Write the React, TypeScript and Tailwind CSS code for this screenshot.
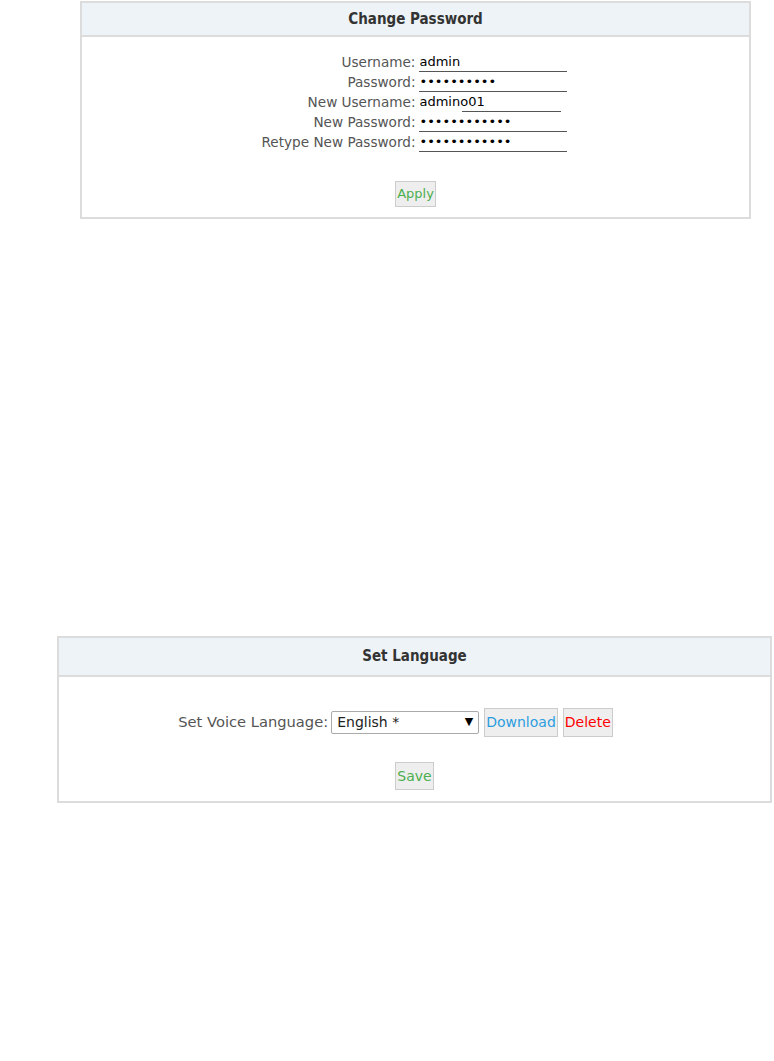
import React from 'react';

const label = "text-right text-[13.6px] text-[#555] pr-1 leading-[20px]";
const field = "w-[148px] h-[20px] border-b border-[#555] text-[13px] text-black leading-[20px]";

function Panel({ title, className, headerH, children }: { title: string; className: string; headerH: string; children: React.ReactNode }) {
  return (
    <div className={`border-2 border-[#dcdcdc] bg-white ${className}`}>
      <div className={`${headerH} flex items-center justify-center bg-[#eef3f7] border-b-2 border-[#dcdcdc] text-[15px] font-bold text-[#333] [font-family:'DejaVu_Sans_Condensed','DejaVu_Sans',sans-serif]`}>
        {title}
      </div>
      {children}
    </div>
  );
}

export default function App() {
  return (
    <div className="w-[774px] h-[1061px] bg-white [font-family:'DejaVu_Sans',Verdana,sans-serif]">
      <div className="pt-px">
        <Panel title="Change Password" className="ml-[80px] w-[671px] h-[218px]" headerH="h-[34px]">
          <div className="pt-[15px] flex justify-center">
            <div className="grid grid-cols-[auto_148px] ml-[-2px]">
              <div className={label}>Username:</div>
              <div className={field}>admin</div>
              <div className={label}>Password:</div>
              <div className={field}>••••••••••</div>
              <div className={label}>New Username:</div>
              <div className="relative w-[148px] h-[20px] text-[13px] text-black leading-[20px]">
                admino01
                <span className="absolute left-[43px] bottom-0 w-[99px] border-b border-[#555]"></span>
              </div>
              <div className={label}>New Password:</div>
              <div className={field}>••••••••••••</div>
              <div className={label}>Retype New Password:</div>
              <div className={field}>••••••••••••</div>
            </div>
          </div>
          <div className="flex justify-center mt-[29px]">
            <button className="h-[26px] px-[1px] bg-[#eeeeee] border border-[#cccccc] text-[13px] text-[#4caf50]">Apply</button>
          </div>
        </Panel>
      </div>

      <div className="mt-[417px]">
        <Panel title="Set Language" className="ml-[57px] w-[715px] h-[167px]" headerH="h-[39px]">
          <div className="flex items-center justify-center pt-[31px] gap-[5px] pr-[38px]">
            <span className="text-[14.7px] text-[#555]">Set Voice Language:</span>
            <div className="ml-[-2px] w-[148px] h-[23px] border border-[#aaa] rounded-[2px] flex items-center justify-between px-[5px] text-[14px] text-[#222]">
              <span>English *</span>
              <span className="text-[11px] text-black">▼</span>
            </div>
            <button className="h-[29px] px-[1px] bg-[#eeeeee] border border-[#cccccc] text-[14px] text-[#2c9de0]">Download</button>
            <button className="h-[29px] px-[1px] bg-[#eeeeee] border border-[#cccccc] text-[14px] text-[#ff0000]">Delete</button>
          </div>
          <div className="flex justify-center mt-[25px]">
            <button className="h-[28px] px-[1px] bg-[#eeeeee] border border-[#cccccc] text-[14px] text-[#4caf50]">Save</button>
          </div>
        </Panel>
      </div>
    </div>
  );
}
